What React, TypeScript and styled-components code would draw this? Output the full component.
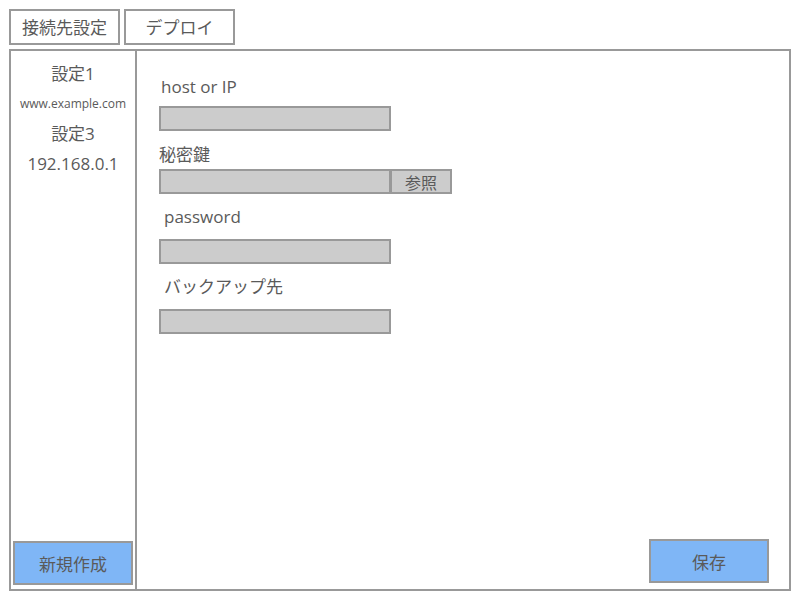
import React from "react";
import styled, { createGlobalStyle } from "styled-components";

const Global = createGlobalStyle`
  html, body { margin: 0; padding: 0; background: #fff; }
  body { font-family: "Open Sans", "Noto Sans CJK JP", sans-serif; color: #5a5a5a; }
`;

const Page = styled.div`
  width: 800px;
  height: 600px;
  box-sizing: border-box;
  padding: 9px;
  display: flex;
  flex-direction: column;
`;

const TabBar = styled.div`
  display: flex;
  gap: 4px;
  height: 36px;
`;

const Tab = styled.div`
  width: 111px;
  box-sizing: border-box;
  border: 2px solid #999;
  padding-bottom: 2px;
  display: flex;
  align-items: center;
  justify-content: center;
  font-size: 17px;
  color: #5a5a5a;
`;

const Panel = styled.div`
  margin-top: 4px;
  width: 782px;
  height: 542px;
  box-sizing: border-box;
  border: 2px solid #999;
  display: flex;
`;

const Sidebar = styled.div`
  width: 124px;
  border-right: 2px solid #999;
  display: flex;
  flex-direction: column;
  align-items: center;
  padding-top: 8px;
  padding-bottom: 4px;
`;

const SideItem = styled.div<{ $small?: boolean }>`
  height: 30px;
  line-height: 30px;
  font-size: ${(p) => (p.$small ? "12px" : "17px")};
  color: #5a5a5a;
  white-space: nowrap;
`;

const Spacer = styled.div`
  flex: 1;
`;

const BlueButton = styled.div<{ $w: number; $h: number }>`
  width: ${(p) => p.$w}px;
  height: ${(p) => p.$h}px;
  box-sizing: border-box;
  background: #7fb6f6;
  border: 2px solid #999;
  display: flex;
  align-items: center;
  justify-content: center;
  font-size: 17px;
  color: #5a5a5a;
`;

const Content = styled.div`
  flex: 1;
  display: flex;
  flex-direction: column;
  padding: 0 20px 6px 22px;
`;

const Label = styled.div<{ $mt: number; $ml: number }>`
  margin-top: ${(p) => p.$mt}px;
  margin-left: ${(p) => p.$ml}px;
  height: 20px;
  line-height: 20px;
  font-size: 17px;
  color: #5a5a5a;
`;

const InputRow = styled.div<{ $mt: number }>`
  margin-top: ${(p) => p.$mt}px;
  display: flex;
`;

const Input = styled.div`
  width: 232px;
  height: 25px;
  box-sizing: border-box;
  background: #cccccc;
  border: 2px solid #999;
`;

const BrowseButton = styled.div`
  width: 62px;
  height: 25px;
  box-sizing: border-box;
  margin-left: -1px;
  background: #cccccc;
  border: 2px solid #999;
  display: flex;
  align-items: center;
  justify-content: center;
  font-size: 16px;
  color: #5a5a5a;
`;

const Footer = styled.div`
  display: flex;
  justify-content: flex-end;
`;

export default function App() {
  return (
    <>
      <Global />
      <Page>
        <TabBar>
          <Tab>接続先設定</Tab>
          <Tab>デプロイ</Tab>
        </TabBar>
        <Panel>
          <Sidebar>
            <SideItem>設定1</SideItem>
            <SideItem $small>www.example.com</SideItem>
            <SideItem>設定3</SideItem>
            <SideItem>192.168.0.1</SideItem>
            <Spacer />
            <BlueButton $w={120} $h={44}>新規作成</BlueButton>
          </Sidebar>
          <Content>
            <Label $mt={26} $ml={2}>host or IP</Label>
            <InputRow $mt={9}>
              <Input />
            </InputRow>
            <Label $mt={14} $ml={0}>秘密鍵</Label>
            <InputRow $mt={4}>
              <Input />
              <BrowseButton>参照</BrowseButton>
            </InputRow>
            <Label $mt={13} $ml={5}>password</Label>
            <InputRow $mt={12}>
              <Input />
            </InputRow>
            <Label $mt={13} $ml={5}>バックアップ先</Label>
            <InputRow $mt={12}>
              <Input />
            </InputRow>
            <Spacer />
            <Footer>
              <BlueButton $w={120} $h={44}>保存</BlueButton>
            </Footer>
          </Content>
        </Panel>
      </Page>
    </>
  );
}
